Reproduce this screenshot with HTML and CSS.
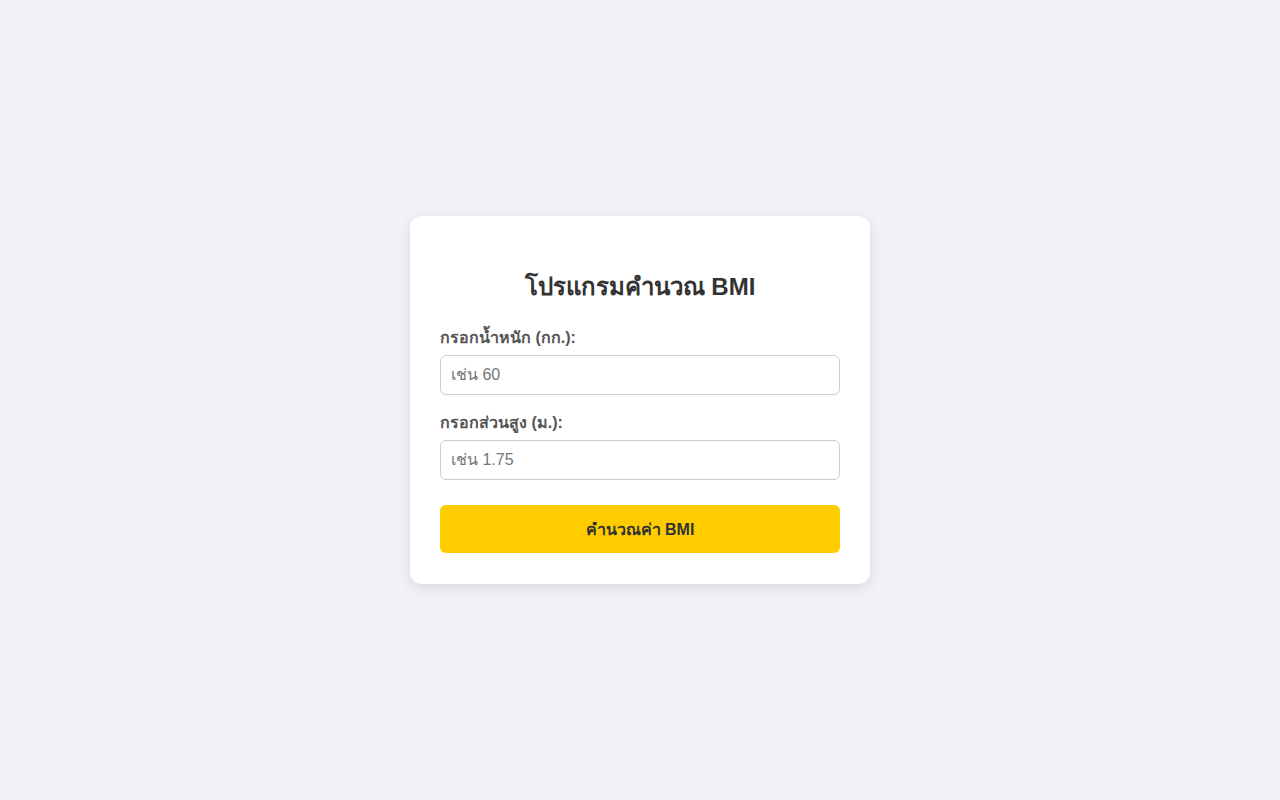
FILE: index.html
```html
<!DOCTYPE html>
<html lang="th">
<head>
<meta charset="utf-8">
<title>โปรแกรมคำนวณ BMI</title>
<link rel="stylesheet" href="styles.css">
</head>
<body>
<div class="card">
  <h2 class="title">โปรแกรมคำนวณ BMI</h2>
  <div class="group">
    <label class="label" for="w">กรอกน้ำหนัก (กก.):</label>
    <input class="input" id="w" type="text" placeholder="เช่น 60">
  </div>
  <div class="group">
    <label class="label" for="h">กรอกส่วนสูง (ม.):</label>
    <input class="input" id="h" type="text" placeholder="เช่น 1.75">
  </div>
  <button class="btn">คำนวณค่า BMI</button>
</div>
</body>
</html>
```
FILE: styles.css
```css
html, body { height: 100%; }
body {
  margin: 0;
  background: #f0f2f5;
  font-family: "Liberation Sans", Arial, sans-serif;
  display: flex;
  align-items: center;
  justify-content: center;
}
.card {
  width: 400px;
  padding: 31px 30px;
  background: #fff;
  border-radius: 12px;
  box-shadow: 0 4px 15px rgba(0,0,0,0.1);
}
.title {
  margin: 20px 0 19px;
  text-align: center;
  font-size: 24px;
  font-weight: bold;
  color: #333;
}
.group {
  display: flex;
  flex-direction: column;
  margin-bottom: 15px;
}
.label {
  font-size: 16px;
  line-height: 25px;
  font-weight: bold;
  color: #555;
  margin-bottom: 5px;
}
.input {
  box-sizing: border-box;
  width: 100%;
  height: 40px;
  padding: 10px;
  font-family: inherit;
  font-size: 16px;
  border: 1px solid #ccc;
  border-radius: 6px;
  color: #333;
  outline: none;
}
.input::placeholder { color: #757575; }
.btn {
  display: block;
  width: 100%;
  height: 48px;
  margin-top: 25px;
  border: none;
  border-radius: 6px;
  background: #ffcc00;
  color: #333;
  font-family: inherit;
  font-size: 16px;
  font-weight: bold;
  cursor: pointer;
}
```
